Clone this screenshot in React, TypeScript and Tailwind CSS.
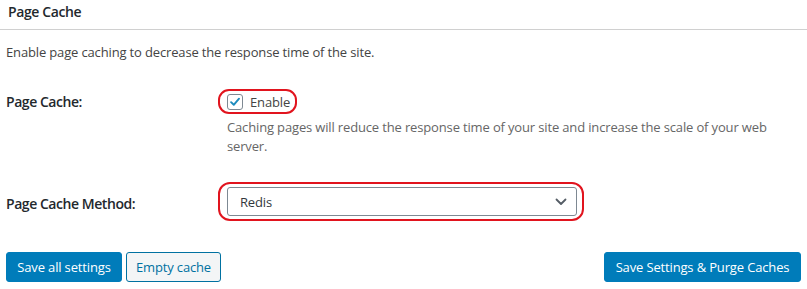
import React from 'react';

const CheckIcon: React.FC = () => (
    <svg width="16" height="16" viewBox="0 0 16 16" className="block">
        <path d="M3.5 8.2 L6.6 11.2 L12.6 4.2" fill="none" stroke="#1e8cbe" strokeWidth="2.2" strokeLinecap="round" strokeLinejoin="round" />
    </svg>
);

const Chevron: React.FC = () => (
    <svg width="12" height="8" viewBox="0 0 12 8" className="block">
        <path d="M1.5 1.5 L6 6 L10.5 1.5" fill="none" stroke="#555d66" strokeWidth="1.8" strokeLinecap="round" strokeLinejoin="round" />
    </svg>
);

const App: React.FC = () => {
    return (
        <div className="w-[807px] h-[289px] bg-white font-['Open_Sans',sans-serif] text-[13px] tracking-[-0.15px] text-[#444] overflow-hidden">

            {/* Title */}
            <div className="h-[30px] border-b border-[#d0d0d0]">
                <h2 className="pl-[8px] pt-[3px] leading-[18px] text-[14px] tracking-[-0.4px] font-semibold text-[#23282d]">Page Cache</h2>
            </div>

            {/* Intro */}
            <p className="mt-[12px] pl-[6px] leading-[20px]">Enable page caching to decrease the response time of the site.</p>

            {/* Page Cache row */}
            <div className="mt-[27px] flex">
                <div className="w-[227px] pl-[6px] pt-[3px] leading-[20px] text-[14px] tracking-[-0.45px] font-semibold text-[#23282d]">Page Cache:</div>
                <div className="flex-1">
                    <label className="-ml-[9px] w-[79px] h-[25px] border-2 border-[#e1141e] rounded-[11px] flex items-center pl-[7px] gap-[7px]">
                        <span className="w-[16px] h-[16px] border border-[#7e8993] rounded-[3px] bg-white flex items-center justify-center">
                            <CheckIcon />
                        </span>
                        <span className="leading-[20px] text-[#444]">Enable</span>
                    </label>
                    <p className="mt-[4px] leading-[19px] text-[#666]">
                        Caching pages will reduce the response time of your site and increase the scale of your web<br />server.
                    </p>
                </div>
            </div>

            {/* Page Cache Method row */}
            <div className="mt-[26px] flex">
                <div className="w-[227px] pl-[6px] pt-[12px] leading-[20px] text-[14px] tracking-[-0.45px] font-semibold text-[#23282d]">Page Cache Method:</div>
                <div className="-ml-[9px] w-[366px] h-[39px] border-2 border-[#e1141e] rounded-[12px] pl-[7px] pt-[3px]">
                    <div className="w-[350px] h-[29px] border border-[#7e8993] rounded-[3px] bg-white flex items-center justify-between pl-[12px] pr-[9px]">
                        <span className="leading-[20px] text-[#32373c]">Redis</span>
                        <Chevron />
                    </div>
                </div>
            </div>

            {/* Buttons */}
            <div className="mt-[31px] px-[6px] flex items-center justify-between">
                <div className="flex gap-[4px]">
                    <button className="h-[30px] w-[116px] rounded-[3px] bg-[#007cba] border border-[#007cba] text-white leading-[28px]">Save all settings</button>
                    <button className="h-[30px] w-[95px] rounded-[3px] bg-[#f3f5f6] border border-[#0071a1] text-[#0071a1] leading-[28px]">Empty cache</button>
                </div>
                <button className="h-[30px] w-[197px] rounded-[3px] bg-[#007cba] border border-[#007cba] text-white leading-[28px]">Save Settings &amp; Purge Caches</button>
            </div>

        </div>
    );
};

export default App;
